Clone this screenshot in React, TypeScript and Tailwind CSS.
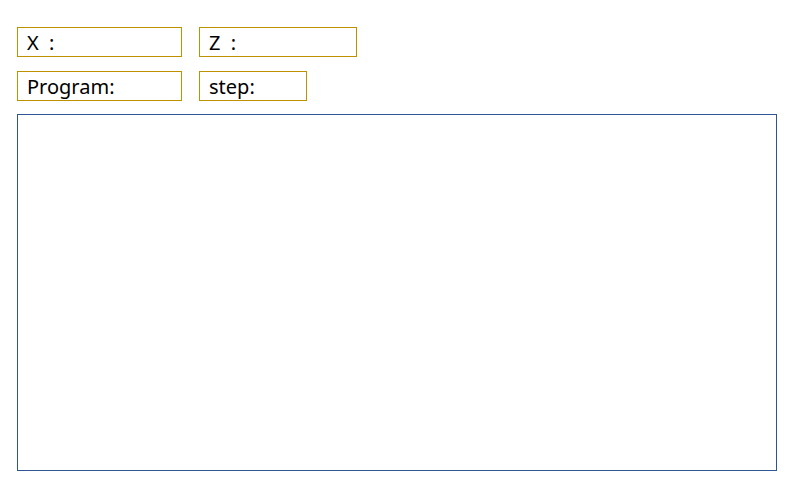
import React from 'react';

const Field: React.FC<{label: string; width: string}> = ({label, width}) => (
  <div className={`${width} h-[30px] border border-[#bf9000] flex items-center pl-[9px] pt-[1px] text-[20px] leading-none text-black whitespace-pre`}>
    <span>{label}</span>
  </div>
);

const App: React.FC = () => {
  return (
    <div className="w-[800px] h-[480px] bg-white pl-[17px] pt-[27px] font-['Noto_Sans',sans-serif]">
      <div className="flex gap-[17px]">
        <Field label="X  :" width="w-[165px]"/>
        <Field label="Z  :" width="w-[158px]"/>
      </div>
      <div className="flex gap-[17px] mt-[14px]">
        <Field label="Program:" width="w-[165px]"/>
        <Field label="step:" width="w-[108px]"/>
      </div>
      <div className="w-[760px] h-[357px] mt-[13px] border border-[#2f5597]"/>
    </div>
  );
};

export default App;
